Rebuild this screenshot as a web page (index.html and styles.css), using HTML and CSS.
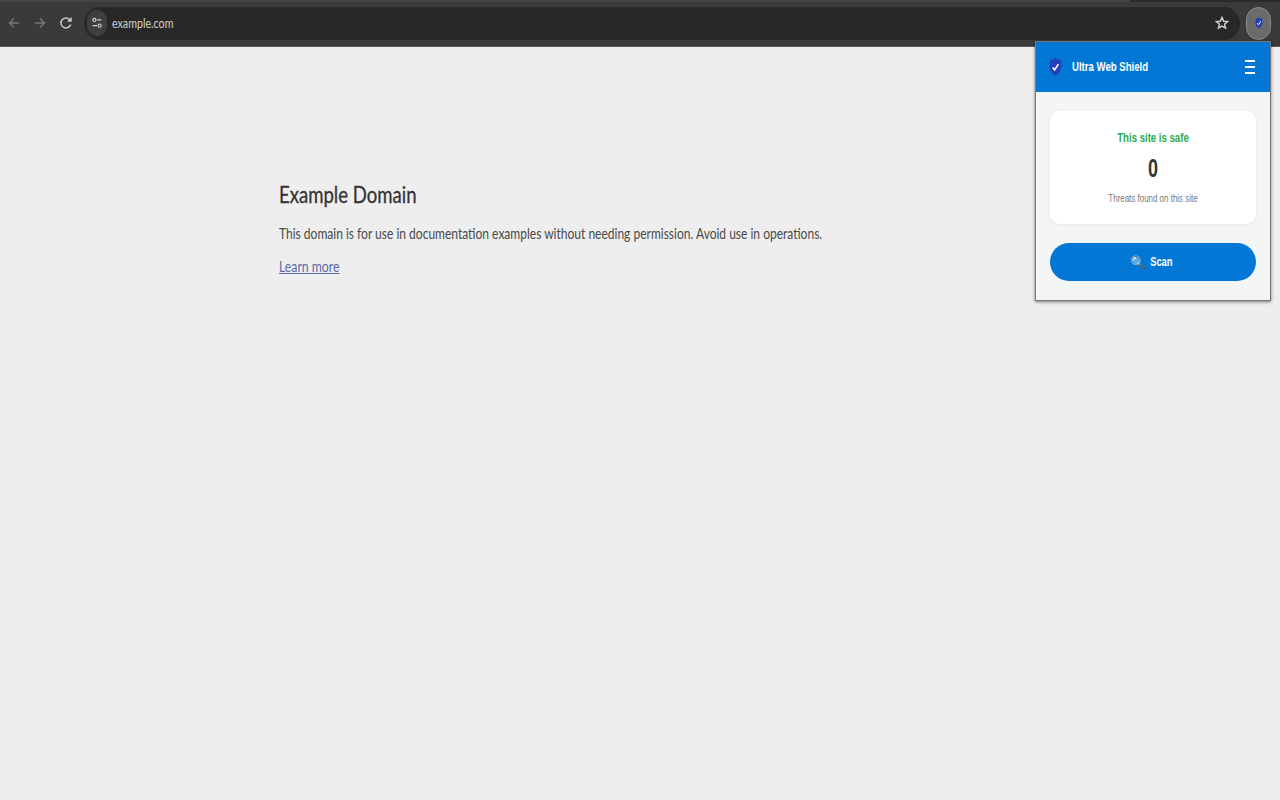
FILE: index.html
```html
<!DOCTYPE html>
<html lang="en">
<head>
<meta charset="utf-8">
<title>Example Domain</title>
<link rel="stylesheet" href="styles.css">
</head>
<body>
<header class="chrome">
  <div class="tabstrip"><span class="tab-line"></span></div>
  <div class="toolbar">
    <svg class="nav dim" viewBox="0 0 16 16"><path d="M13 8H4M8 3.500 3.500 8 8 12.500"/></svg>
    <svg class="nav dim" viewBox="0 0 16 16"><path d="M3 8h9M8 3.500 12.500 8 8 12.500"/></svg>
    <svg class="nav" viewBox="0 0 16 16"><path d="M12.700 9.500A5 5 0 1 1 11.500 4.400L13 6M13 2.500V6H9.500"/></svg>
    <div class="omnibox">
      <span class="site-chip"><svg class="tune" viewBox="0 0 16 16"><circle cx="5" cy="4.500" r="1.800"/><path d="M8 4.500h5M3 11h5"/><circle cx="11" cy="11" r="1.800"/></svg></span>
      <span class="url"><span class="squeeze">example.com</span></span>
      <svg class="star" viewBox="0 0 16 16"><path d="m8 2.500 1.700 3.700 3.800.400-2.900 2.600.900 3.900L8 11.100l-3.500 2 .900-3.900-2.900-2.600 3.800-.400z"/></svg>
    </div>
    <span class="ext-btn"><svg class="shield small" viewBox="0 0 16 24"><path class="shield-body" d="M8 1 15 4V12c0 5-3 8.500-7 11-4-2.500-7-6-7-11V4z"/><path class="shield-check" d="m4.500 12.500 2.500 3 4.500-7"/></svg></span>
  </div>
</header>
<main class="page">
  <h1>Example Domain</h1>
  <p class="lead">This domain is for use in documentation examples without needing permission. Avoid use in operations.</p>
  <p class="more"><a href="#">Learn more</a></p>
</main>
<aside class="popup">
  <div class="popup-head">
    <svg class="shield" viewBox="0 0 16 24"><path class="shield-body" d="M8 1 15 4V12c0 5-3 8.500-7 11-4-2.500-7-6-7-11V4z"/><path class="shield-check" d="m4.500 12.500 2.500 3 4.500-7"/></svg>
    <span class="brand">Ultra Web Shield</span>
    <span class="burger"><i></i><i></i><i></i></span>
  </div>
  <div class="popup-body">
    <div class="status-card">
      <div class="status">This site is safe</div>
      <div class="count">0</div>
      <div class="caption">Threats found on this site</div>
    </div>
    <button class="scan"><span class="glass">🔍</span><span class="scan-label">Scan</span></button>
  </div>
</aside>
</body>
</html>
```

FILE: styles.css
```css
* { box-sizing: border-box; }
html, body { margin: 0; height: 100%; }
body { background: #eeeeee; font-family: "Lato", "Open Sans", sans-serif; overflow: hidden; }
.chrome { height: 47px; background: #3a3a3a; display: flex; flex-direction: column; border-bottom: 1px solid #5a5a5a; }
.tabstrip { height: 2px; background: #2b2b2b; flex: none; }
.tab-line { display: block; width: 1130px; height: 2px; background: #444; }
.toolbar { flex: 1; display: flex; align-items: center; padding: 0 9px 2px 6px; background: #3a3a3a; }
.nav { width: 16px; height: 16px; margin-right: 10px; fill: none; stroke: #c8c8c8; stroke-width: 1.500; }
.nav.dim { stroke: #757575; }
.omnibox { flex: 1; height: 33px; margin: 0 6px 0 0; background: #282828; border-radius: 17px; display: flex; align-items: center; padding: 0 10px 0 3px; }
.site-chip { width: 20px; height: 26px; border-radius: 13px; background: #3f3f3f; display: flex; align-items: center; justify-content: center; }
.tune { width: 14px; height: 14px; fill: none; stroke: #d0d0d0; stroke-width: 1.300; }
.url { margin-left: 5px; color: #d0d0d0; font-size: 13.500px; flex: 1; }
.squeeze { display: inline-block; transform: scaleX(.79); transform-origin: left center; }
.star { width: 16px; height: 16px; fill: none; stroke: #cfcfcf; stroke-width: 1.500; }
.ext-btn { width: 25px; height: 33px; border-radius: 13px; background: #6b6b6b; border: 1px solid #8a8a8a; display: flex; align-items: center; justify-content: center; }
.shield { width: 13px; height: 20px; }
.shield.small { width: 8px; height: 12px; }
.shield-body { fill: #2340b5; }
.shield-check { fill: none; stroke: #fff; stroke-width: 2; }
.page { margin: 0 0 0 279px; padding-top: 133px; width: 760px; color: #333; }
h1 { font-size: 23px; font-weight: 400; margin: 0 0 15px; line-height: 28px; transform: scaleX(.807); transform-origin: left center; -webkit-text-stroke: .3px #333; }
.page p { margin: 0 0 13px; font-size: 16px; line-height: 20px; white-space: nowrap; transform-origin: left center; color: #4a4a4a; }
.page .lead { transform: scaleX(.751); }
.page .more { transform: scaleX(.765); }
.page a { color: #5a6aa8; }
.popup { position: absolute; left: 1035px; top: 41px; width: 236px; height: 260px; background: #f4f6f6; border: 1px solid #777; box-shadow: 0 1px 3px rgba(0,0,0,.5); font-family: "Liberation Sans", Arial, sans-serif; }
.popup-head { height: 50px; background: #0277d6; display: flex; align-items: center; padding: 0 15px 0 13px; color: #fff; }
.popup-head .shield { margin: -1px 10px 0 0; }
.brand { flex: 1; font-size: 12px; font-weight: 700; transform: scaleX(.8); transform-origin: left center; }
.burger { display: flex; flex-direction: column; gap: 4px; width: 10px; }
.burger i { height: 2px; background: #fff; display: block; }
.popup-body { padding: 19px 14px; display: flex; flex-direction: column; gap: 19px; }
.status-card { height: 113px; background: #fff; border-radius: 10px; box-shadow: 0 1px 4px rgba(0,0,0,.06); text-align: center; padding-top: 20px; }
.status { color: #27ae4f; font-size: 12px; font-weight: 700; line-height: 14px; transform: scaleX(.8); }
.count { color: #333; font-size: 25px; font-weight: 700; line-height: 26px; margin-top: 10px; transform: scaleX(.72); }
.caption { color: #777; font-size: 10px; line-height: 12px; margin-top: 12px; transform: scaleX(.795); }
.scan { height: 38px; border: 0; border-radius: 19px; background: #0277d6; color: #fff; font: 700 12px "Liberation Sans", Arial, sans-serif; display: flex; align-items: center; justify-content: center; gap: 0; }
.scan-label { display: inline-block; transform: scaleX(.78); }
.glass { font-size: 13px; font-family: "Noto Color Emoji", "DejaVu Sans", sans-serif; font-weight: 400; }
```
